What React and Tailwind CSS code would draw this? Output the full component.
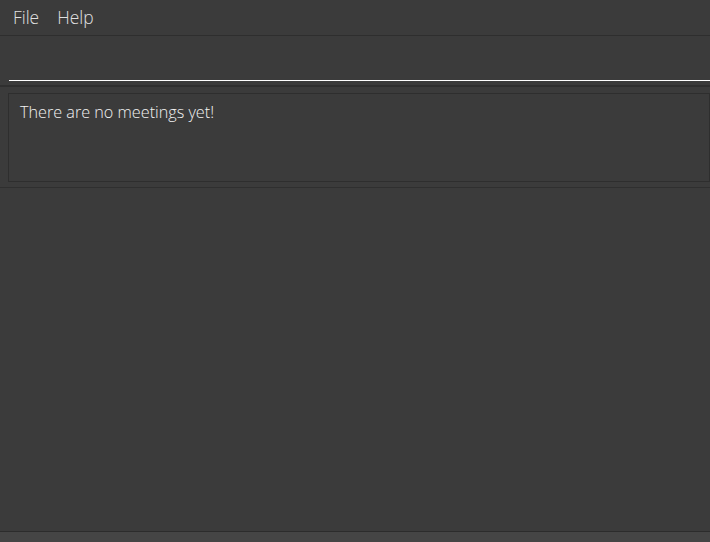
export default function App() {
  return (
    <div
      className="flex flex-col h-[542px] w-[710px] bg-[#3b3b3b] overflow-hidden"
      style={{ fontFamily: '"Open Sans", "Noto Sans", sans-serif' }}
    >
      {/* menu bar */}
      <div className="flex h-[36px] items-center gap-[18px] pl-[13px] border-b border-[#2e2e2e] text-[17.4px] font-light text-[#e0e0e0]">
        <span>File</span>
        <span>Help</span>
      </div>

      {/* command box */}
      <div className="h-[51px] pl-[9px] flex flex-col justify-end border-b-2 border-[#2f2f2f]">
        <div className="h-[1.5px] bg-white mb-[4px]" />
      </div>

      {/* result display */}
      <div className="h-[101px] pt-[6px] pl-[8px] pb-[5px] border-b border-[#2f2f2f]">
        <div className="h-full border border-[#2e2e2e] px-[11px] pt-[6px] text-[16.2px] font-light text-[#f2f2f2]">
          There are no meetings yet!
        </div>
      </div>

      {/* list panel */}
      <div className="flex-1" />

      {/* status bar */}
      <div className="h-[11px] border-t border-[#2c2c2c] bg-[#454545]" />
    </div>
  );
}
